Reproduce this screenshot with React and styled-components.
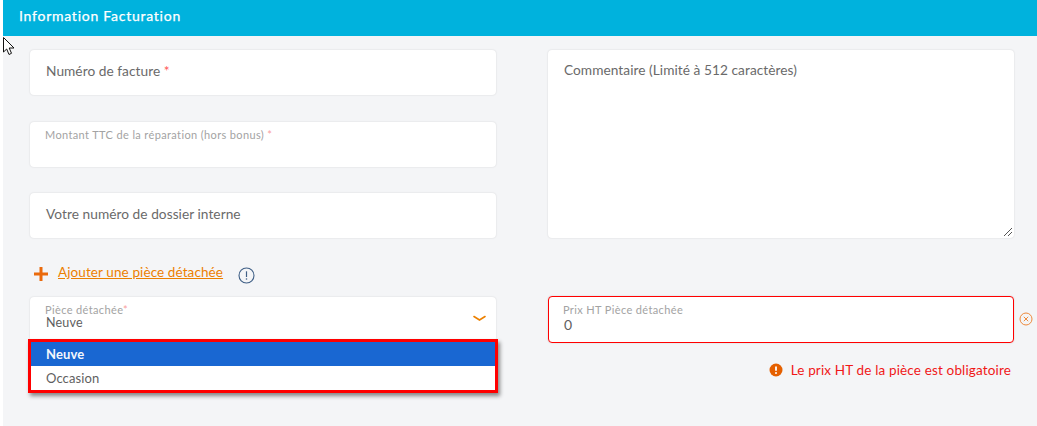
import React from "react";
import styled, { createGlobalStyle } from "styled-components";

const Global = createGlobalStyle`
  html, body { margin: 0; padding: 0; background: #fff; height: 100%; overflow: hidden; }
  body { font-family: "Lato", "Liberation Sans", sans-serif; color: #555; }
`;

const Page = styled.div`
  margin-left: 3px;
  height: 426px;
  background: #f4f5f7;
  position: relative;
`;
const Header = styled.header`
  height: 36px;
  background: #00b2dd;
  color: #fff;
  font-size: 14px;
  font-weight: 400;
  letter-spacing: 0.75px;
  -webkit-text-stroke: 0.25px #fff;
  display: flex;
  align-items: center;
  padding: 0 0 5px 16px;
  box-sizing: border-box;
`;
const Cursor = styled.svg`
  position: absolute;
  left: 0;
  top: 37px;
`;
const Body = styled.div`
  display: grid;
  grid-template-columns: 465.5px 466px;
  column-gap: 52.5px;
  padding: 14px 0 0 27px;
`;
const Column = styled.div`
  display: flex;
  flex-direction: column;
`;
const Stack = styled(Column)`
  gap: 26.5px;
`;
const Card = styled.div`
  box-sizing: border-box;
  height: 45px;
  background: #fff;
  border-radius: 4px;
  box-shadow: 0 0 2px rgba(0, 0, 0, 0.14);
  position: relative;
  display: flex;
  flex-direction: column;
  justify-content: ${p => (p.$top ? "flex-start" : "center")};
  padding: ${p => (p.$top ? "6px 16px" : "0 16px 4px")};
  ${p => p.$error && "border: 1px solid #f00; padding: 6px 15px; height: 47px;"}
`;
const TextArea = styled(Card)`
  height: 188px;
  justify-content: flex-start;
  padding: 11px 16px;
`;
const Placeholder = styled.div`
  font-size: 13.7px;
  letter-spacing: 0.05px;
  color: #6a6a6a;
  line-height: 18px;
`;
const Star = styled.span`
  color: #f55;
`;
const FloatLabel = styled.div`
  font-size: 11px;
  line-height: 13px;
  letter-spacing: 0.37px;
  color: #a3a3a3;
  margin-left: -1px;
`;
const FadedStar = styled.span`
  color: #f9a0a0;
`;
const Value = styled.div`
  font-size: ${p => (p.$large ? "14px" : "12.5px")};
  margin-top: ${p => (p.$large ? "2px" : "0")};
  line-height: 14px;
  letter-spacing: 0.2px;
  color: #5e5e5e;
`;
const Resize = styled.svg`
  position: absolute;
  right: 1px;
  bottom: 1px;
`;
const AddRow = styled.div`
  height: 59px;
  display: flex;
  align-items: center;
  padding: 13px 0 0 4px;
  box-sizing: border-box;
`;
const AddLink = styled.a`
  color: #ec8000;
  font-size: 13.5px;
  letter-spacing: 0.1px;
  text-decoration: underline;
  margin-left: 10px;
  position: relative;
  top: -2px;
`;
const InfoIcon = styled.svg`
  margin-left: 15px;
  position: relative;
  top: 1px;
`;
const Chevron = styled.svg`
  position: absolute;
  right: 10px;
  top: 18px;
`;
const Menu = styled.div`
  position: absolute;
  left: -2px;
  top: 42px;
  width: 470px;
  box-sizing: border-box;
  border: 3px solid #f00;
  background: #fff;
  box-shadow: 2px 3px 4px rgba(0, 0, 0, 0.45);
  z-index: 2;
`;
const Option = styled.div`
  height: 24px;
  display: flex;
  align-items: center;
  padding-left: 15px;
  font-size: 13px;
  letter-spacing: 0.1px;
  font-weight: ${p => (p.$selected ? 700 : 400)};
  background: ${p => (p.$selected ? "#1967d2" : "#fff")};
  color: ${p => (p.$selected ? "#f4f7fc" : "#5f5f5f")};
`;
const PriceWrap = styled.div`
  position: relative;
`;
const Clear = styled.svg`
  position: absolute;
  right: -19px;
  top: 16px;
`;
const ErrorRow = styled.div`
  display: flex;
  justify-content: flex-end;
  align-items: center;
  gap: 8px;
  margin-top: 19px;
  padding-right: 3px;
  color: #f01818;
  font-size: 13.5px;
  letter-spacing: 0.15px;
`;
const SpacerBlock = styled.div`
  height: 58px;
`;

export default function App() {
  return (
    <>
      <Global />
      <Page>
        <Header>Information Facturation</Header>
        <Cursor width="14" height="19" viewBox="0 0 14 19">
          <path d="M0.5 0.5 V15 L3.7 12 L6 17.5 L8.5 16.3 L6.2 11 H11 Z" fill="#fff" stroke="#111" strokeWidth="1" />
        </Cursor>
        <Body>
          <Column>
            <Stack>
              <Card>
                <Placeholder>Numéro de facture <Star>*</Star></Placeholder>
              </Card>
              <Card $top>
                <FloatLabel>Montant TTC de la réparation (hors bonus) <FadedStar>*</FadedStar></FloatLabel>
              </Card>
              <Card>
                <Placeholder>Votre numéro de dossier interne</Placeholder>
              </Card>
            </Stack>
            <AddRow>
              <svg width="14" height="14" viewBox="0 0 14 14">
                <path d="M7 0.5 V13.5 M0.5 7 H13.5" stroke="#ea6a0c" strokeWidth="3" strokeLinecap="round" />
              </svg>
              <AddLink>Ajouter une pièce détachée</AddLink>
              <InfoIcon width="17" height="17" viewBox="0 0 17 17">
                <circle cx="8.5" cy="8.5" r="7.5" fill="none" stroke="#3f5f86" strokeWidth="1.1" />
                <path d="M8.5 4.3 V10" stroke="#3f5f86" strokeWidth="1.2" />
                <circle cx="8.5" cy="12" r="0.8" fill="#3f5f86" />
              </InfoIcon>
            </AddRow>
            <Card $top>
              <FloatLabel>Pièce détachée<FadedStar>*</FadedStar></FloatLabel>
              <Value>Neuve</Value>
              <Chevron width="13" height="7" viewBox="0 0 13 7">
                <path d="M1 1.5 L6.5 5 L12 1.5" fill="none" stroke="#ec8000" strokeWidth="1.6" strokeLinecap="round" />
              </Chevron>
              <Menu>
                <Option $selected>Neuve</Option>
                <Option>Occasion</Option>
              </Menu>
            </Card>
          </Column>
          <Column>
            <TextArea>
              <Placeholder>Commentaire (Limité à 512 caractères)</Placeholder>
              <Resize width="10" height="10" viewBox="0 0 10 10">
                <path d="M1 9 L9 1 M5 9 L9 5" stroke="#555" strokeWidth="1" />
              </Resize>
            </TextArea>
            <SpacerBlock />
            <PriceWrap>
              <Card $top $error>
                <FloatLabel>Prix HT Pièce détachée</FloatLabel>
                <Value $large>0</Value>
              </Card>
              <Clear width="14" height="14" viewBox="0 0 14 14">
                <circle cx="7" cy="7" r="6" fill="none" stroke="#ee8a3c" strokeWidth="1" />
                <path d="M4.8 4.8 L9.2 9.2 M9.2 4.8 L4.8 9.2" stroke="#ee8a3c" strokeWidth="1" />
              </Clear>
            </PriceWrap>
            <ErrorRow>
              <svg width="14" height="14" viewBox="0 0 14 14">
                <circle cx="7" cy="7" r="6.5" fill="#e56000" />
                <path d="M7 3.4 V7.8" stroke="#fff" strokeWidth="1.8" />
                <circle cx="7" cy="10" r="1" fill="#fff" />
              </svg>
              Le prix HT de la pièce est obligatoire
            </ErrorRow>
          </Column>
        </Body>
      </Page>
    </>
  );
}
